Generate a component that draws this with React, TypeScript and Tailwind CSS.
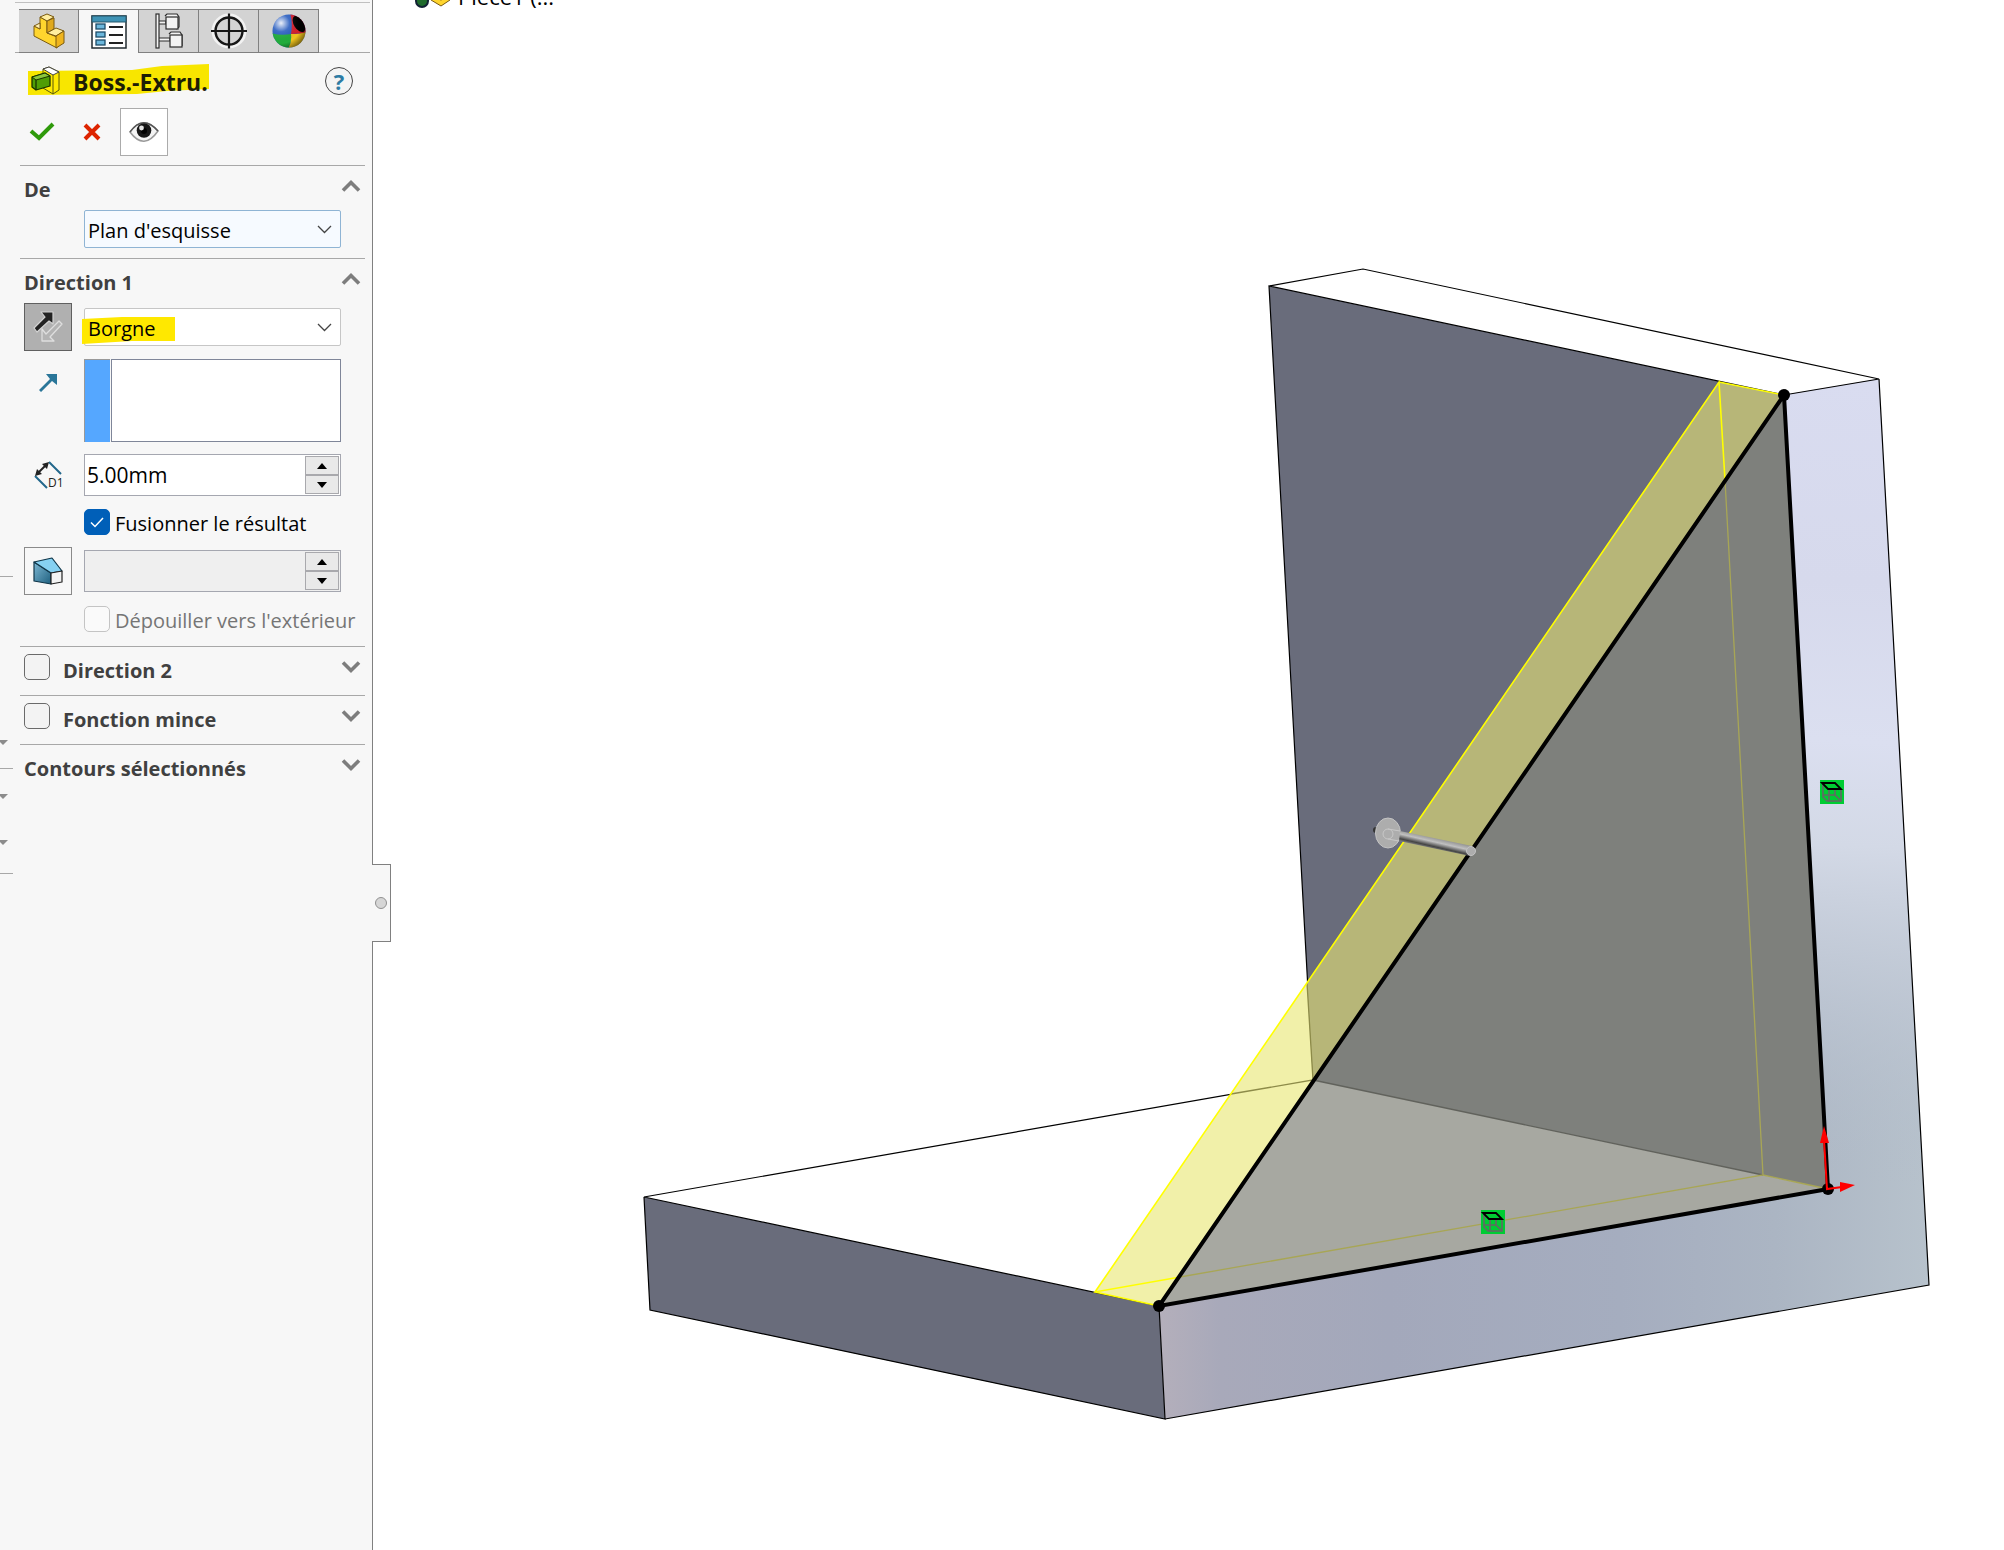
import { useState } from "react";
import type { ReactNode } from "react";

var S = {
  line: "border-[#a8a8a8]",
  field: "border border-[#a5a7b0]",
  heading: "text-[20px] leading-6 font-bold text-[#404040]",
  label: "text-[20px] leading-6",
};

function PartIcon() {
  return (
    <svg width="34" height="36" viewBox="0 0 34 36" strokeLinejoin="round" stroke="#7a5a10" strokeWidth="1">
      <path d="M2 13 L8 16 V4 L15 8 V20 L25 24 V35 L2 23Z" fill="#ffd52e" />
      <path d="M15 8 L22 5 V16 L15 20Z" fill="#e0a91c" />
      <path d="M8 4 L15 1 L22 4 L15 8Z" fill="#ffeea0" />
      <path d="M2 13 L8 10 V16Z" fill="#fff0b4" />
      <path d="M15 20 L24 15 L32 18 L24 23Z" fill="#ffeea0" />
      <path d="M24 23 L32 18 V30 L24 35Z" fill="#efb41d" />
    </svg>
  );
}

function PropertyIcon() {
  return (
    <svg width="36" height="34" viewBox="0 0 36 34">
      <rect x="1" y="1" width="34" height="32" fill="#fff" stroke="#222b30" strokeWidth="1.5" />
      <rect x="1" y="1" width="34" height="6" fill="#3f93b5" stroke="#24566b" strokeWidth="1" />
      {[9, 17, 25].map(function(y) {
        return (
          <g key={y}>
            <rect x="5" y={y} width="9" height="5" fill="#6cb7dc" stroke="#1d4c68" strokeWidth="1.3" />
            <path d={"M18 " + (y + 3) + "H32"} stroke="#222" strokeWidth="2" />
          </g>
        );
      })}
    </svg>
  );
}

function ConfigIcon() {
  return (
    <svg width="30" height="36" viewBox="0 0 30 36" fill="#f3f3f3" stroke="#2c2c2c" strokeWidth="1.2">
      <path d="M4 8 H12 V11 H4Z M4 25 H16 V28 H4Z" />
      <rect x="2" y="1" width="3" height="34" />
      <path d="M11 3 L13 1 H23 L25 4 V14 L22 16" />
      <rect x="12" y="4" width="12" height="12" />
      <path d="M15 21 L17 19 H26 L28 22 V33" />
      <rect x="16" y="22" width="12" height="12" />
    </svg>
  );
}

function TargetIcon() {
  return (
    <svg width="38" height="38" viewBox="0 0 38 38" fill="none">
      <circle cx="19" cy="19" r="15" stroke="#f2f2f2" strokeWidth="5" />
      <circle cx="19" cy="19" r="13.5" stroke="#161616" strokeWidth="2.4" />
      <path d="M1 19H37M19 1.500V36.500" stroke="#161616" strokeWidth="2.200" />
    </svg>
  );
}

function AppearanceIcon() {
  return (
    <svg width="36" height="36" viewBox="0 0 36 36">
      <defs>
        <clipPath id="ball"><circle cx="18" cy="18" r="16.500" /></clipPath>
        <radialGradient id="shine" cx="0.28" cy="0.28" r="0.8">
          <stop offset="0" stopColor="#fff" stopOpacity="0.9" />
          <stop offset="0.3" stopColor="#fff" stopOpacity="0.1" />
          <stop offset="0.7" stopColor="#000" stopOpacity="0" />
          <stop offset="1" stopColor="#000" stopOpacity="0.55" />
        </radialGradient>
      </defs>
      <g clipPath="url(#ball)">
        <rect width="36" height="36" fill="#2b5fc0" />
        <path d="M0 20 Q10 23 20 21 Q21 30 17 36 H0Z" fill="#22ad3c" />
        <path d="M20 21 Q30 21 36 18 V36 H17 Q21 29 20 21Z" fill="#eec21c" />
        <path d="M19 0 H36 V19 Q30 21 20 21 Q22 10 19 0Z" fill="#d31f2c" />
        <ellipse cx="28" cy="11" rx="5" ry="9" transform="rotate(-32 28 11)" fill="#000" />
        <rect width="36" height="36" fill="url(#shine)" />
      </g>
    </svg>
  );
}

function BossIcon() {
  return (
    <svg width="30" height="30" viewBox="0 0 30 30" strokeLinejoin="round">
      <path d="M12 3 L18 1 L28 6 V24 L22 28 L12 22Z" fill="#ffea00" stroke="#59590d" strokeWidth="1" />
      <path d="M12 3 L18 1 L28 6 L22 9Z" fill="#fff" stroke="#444" strokeWidth="1" />
      <path d="M22 9V28" stroke="#59590d" strokeWidth="1" />
      <path d="M1 11 L14 7 L19 10 V20 L5 24 L1 21Z" fill="#4f9d05" stroke="#173300" strokeWidth="1.300" />
      <path d="M1 11 L14 7 L19 10 L5 14Z" fill="#8bc63c" stroke="#173300" strokeWidth="1" />
      <path d="M5 14V24" stroke="#173300" strokeWidth="1.300" />
    </svg>
  );
}

function EyeIcon() {
  return (
    <svg width="30" height="24" viewBox="0 0 30 24">
      <path d="M1 12 Q14 -6 29 11 Q15 31 1 12Z" fill="#f4f4f4" stroke="#9a9a9a" strokeWidth="1.600" />
      <path d="M1 12 Q14 -6 29 11" fill="none" stroke="#555" strokeWidth="1.400" />
      <circle cx="15" cy="10.500" r="7.300" fill="#161616" />
      <circle cx="15" cy="11" r="3" fill="#000" />
      <circle cx="12.500" cy="8" r="2.400" fill="#e4e4e4" />
    </svg>
  );
}

function ReverseIcon() {
  return (
    <svg width="32" height="34" viewBox="0 0 32 34" strokeLinejoin="round">
      <path d="M2 18 L13 7 L9 2 H21 V14 L17 11 L5 22Z" fill="#222" stroke="#d2d2d2" strokeWidth="1.200" />
      <path d="M30 14 L27 11 L14 24 L10 19 V31 H22 L18 27Z" fill="#b4b4b4" stroke="#dedede" strokeWidth="1.300" />
    </svg>
  );
}

function DepthIcon() {
  return (
    <svg className="shrink-0" width="30" height="30" viewBox="0 0 30 30">
      <path d="M2 16 L14 28 M16 2 L28 14" stroke="#23688c" strokeWidth="2" />
      <path d="M5 13 L13 5" stroke="#222" strokeWidth="2" />
      <path d="M2 16 L4 9 L9 14Z M16 2 L9 4 L14 9Z" fill="#222" />
      <text x="15" y="27" fontSize="12" fontFamily="Open Sans, sans-serif" fill="#222">D1</text>
    </svg>
  );
}

function DraftIcon() {
  return (
    <svg width="30" height="28" viewBox="0 0 30 28" strokeLinejoin="round" stroke="#0f3548" strokeWidth="1.200">
      <defs>
        <linearGradient id="draft" x1="0" y1="0" x2="1" y2="1">
          <stop offset="0" stopColor="#7db8d4" />
          <stop offset="1" stopColor="#1f607f" />
        </linearGradient>
      </defs>
      <path d="M1 5 L18 16 V27 L1 24Z" fill="url(#draft)" />
      <path d="M1 5 L19 1 L29 14 L18 16Z" fill="#86d1f2" />
      <path d="M18 16 L29 14 V25 L18 27Z" fill="#f3f3f3" stroke="#222" />
    </svg>
  );
}

function Chevron({ open }: { open: boolean }) {
  return (
    <svg width="20" height="14" viewBox="0 0 20 14" fill="none" stroke="#7d7d7d" strokeWidth="3.600">
      <path d={open ? "M2 11.500 L10 3.500 L18 11.500" : "M2 2.500 L10 10.500 L18 2.500"} />
    </svg>
  );
}

function Heading({ title, open, children }: { title: string; open: boolean; children?: ReactNode }) {
  return (
    <div className="h-10 mb-1 flex items-center pl-1 pr-1">
      {children}
      <button type="button" aria-expanded={open} className="flex-1 flex items-center justify-between">
        <span className={"pt-2 " + S.heading}>{title}</span>
        <Chevron open={open} />
      </button>
    </div>
  );
}

function Dropdown({ label, value, className, mark }: { label: string; value: string; className: string; mark?: boolean }) {
  return (
    <div className={"relative isolate flex-1 min-w-0 h-[38px] rounded-xs border " + className}>
      {mark && (
        <svg className="absolute -left-[3px] top-[7px] -z-10" width="94" height="28" viewBox="0 0 94 28">
          <path d="M0 3 L40 1 L93 1 V25 L50 25 L0 28Z" fill="#ffe800" />
        </svg>
      )}
      <select aria-label={label} className={"appearance-none w-full h-full pl-[3px] pt-[3px] bg-transparent text-black outline-none " + S.label}>
        <option>{value}</option>
      </select>
      <svg className="absolute right-2 top-3 pointer-events-none" width="15" height="12" viewBox="0 0 15 12">
        <path d="M1 3 L7.500 9.500 L14 3" fill="none" stroke="#444" strokeWidth="1.300" />
      </svg>
    </div>
  );
}

function SpinBox({ label, value, disabled }: { label: string; value: string; disabled?: boolean }) {
  return (
    <div className={"flex-1 min-w-0 flex h-[42px] p-px " + S.field + " " + (disabled ? "bg-[#efefef]" : "bg-white")}>
      <input aria-label={label} defaultValue={value} disabled={disabled} className="flex-1 min-w-0 pl-px bg-transparent text-[21px] leading-6 text-black outline-none" />
      <div className="w-[34px] shrink-0 flex flex-col">
        {["M0 6 L5 0 L10 6Z", "M0 0 L5 6 L10 0Z"].map(function(d, i) {
          return (
            <button key={d} type="button" aria-label={label + (i === 0 ? " +" : " -")} className="flex-1 flex items-center justify-center border border-[#a9a9ad] bg-[#e9e9e9]">
              <svg width="10" height="6" viewBox="0 0 10 6"><path d={d} fill="#000" /></svg>
            </button>
          );
        })}
      </div>
    </div>
  );
}

function Tick({ id, label, checked, disabled, onChange }: { id: string; label?: string; checked: boolean; disabled?: boolean; onChange?: () => void }) {
  return (
    <span className="relative flex w-[26px] h-[26px] shrink-0">
      <input
        id={id}
        type="checkbox"
        aria-label={label}
        checked={checked}
        disabled={disabled}
        onChange={onChange}
        className="appearance-none w-full h-full rounded-[5px] border border-[#6a6a6a] bg-[#f3f3f3] checked:border-[#005fb8] checked:bg-[#005fb8] disabled:border-[#c4c4c4] disabled:bg-[#fafafa]"
      />
      {checked && (
        <svg className="absolute inset-0 pointer-events-none" width="26" height="26" viewBox="0 0 26 26">
          <path d="M7 13.500 L11 17.500 L19 9" fill="none" stroke="#fff" strokeWidth="1.500" />
        </svg>
      )}
    </span>
  );
}

// leftovers of the vertical toolbar docked beside the panel
function ToolbarEdge() {
  var arrow = <svg width="8" height="5" viewBox="0 0 8 5"><path d="M-2 0H8L3 5Z" fill="#8c8c8c" /></svg>;
  return (
    <div className="w-[15px] shrink-0 pr-0.5 flex flex-col">
      <div className={"h-[577px] border-b " + S.line} />
      <div className="h-[163px]" />
      {arrow}
      <div className={"h-6 border-b " + S.line} />
      <div className="h-[25px]" />
      {arrow}
      <div className="h-[41px]" />
      {arrow}
      <div className={"h-[29px] border-b " + S.line} />
    </div>
  );
}

function Tabs() {
  var tabs = [
    { name: "FeatureManager", icon: <PartIcon /> },
    { name: "PropertyManager", icon: <PropertyIcon /> },
    { name: "ConfigurationManager", icon: <ConfigIcon /> },
    { name: "DimXpertManager", icon: <TargetIcon /> },
    { name: "DisplayManager", icon: <AppearanceIcon /> },
  ];
  return (
    <div role="tablist" className="flex h-11">
      <div className={"w-1 border-b " + S.line} />
      {tabs.map(function(tab, i) {
        return (
          <button
            key={tab.name}
            type="button"
            role="tab"
            aria-label={tab.name}
            aria-selected={i === 1}
            className={"w-[60px] flex items-center justify-center border-t border-r border-[#808080] " + (i === 1 ? "" : "border-b bg-[#d3d3d3]")}
          >
            {tab.icon}
          </button>
        );
      })}
      <div className={"flex-1 border-b " + S.line} />
    </div>
  );
}

function ConstraintMark({ x, y }: { x: number; y: number }) {
  return (
    <g transform={"translate(" + x + " " + y + ")"} fill="none" strokeWidth="2">
      <rect width="24" height="24" fill="#00cc33" />
      <path d="M3 4 V17 L7 21 H21 V10 M9 10 V21 M3 15 H15 V9 M15 15 L20 20" stroke="#666" strokeWidth="1.600" />
      <path d="M2 3 H15 L21 9 H8Z" stroke="#000" strokeWidth="1.800" />
    </g>
  );
}

function Scene() {
  return (
    <svg className="block w-full h-screen" viewBox="373 0 1631 1550" preserveAspectRatio="xMinYMin meet" role="img" aria-label="Pièce1">
      <defs>
        <linearGradient id="base" gradientUnits="userSpaceOnUse" x1="1159" y1="0" x2="1929" y2="0">
          <stop offset="0" stopColor="#b4afbb" />
          <stop offset="0.080" stopColor="#a8a9ba" />
          <stop offset="0.300" stopColor="#a3a8bb" />
          <stop offset="0.600" stopColor="#a5adbf" />
          <stop offset="0.800" stopColor="#abb5c3" />
          <stop offset="1" stopColor="#b7c2cc" />
        </linearGradient>
        <linearGradient id="wall" gradientUnits="userSpaceOnUse" x1="1840" y1="380" x2="1800" y2="1180">
          <stop offset="0" stopColor="#d9dcf0" />
          <stop offset="0.250" stopColor="#d6d9ec" />
          <stop offset="0.450" stopColor="#dbdff0" />
          <stop offset="0.580" stopColor="#d3d9e6" />
          <stop offset="0.750" stopColor="#c2cad7" stopOpacity="0.800" />
          <stop offset="1" stopColor="#b0bac8" stopOpacity="0" />
        </linearGradient>
        <linearGradient id="rod" gradientUnits="userSpaceOnUse" x1="1437" y1="837" x2="1434" y2="850">
          <stop offset="0" stopColor="#8a8a8a" />
          <stop offset="0.400" stopColor="#c0c0c0" />
          <stop offset="0.750" stopColor="#444" />
          <stop offset="1" stopColor="#999" />
        </linearGradient>
      </defs>

      {/* bracket */}
      <path d="M1269 286 L1784 395 L1828 1189 L1313 1080Z" fill="#696c7b" />
      <path d="M644 1197 L1159 1306 L1165 1419 L650 1310Z" fill="#696c7b" />
      <path d="M1784 395 L1879 379 L1929 1285 L1165 1419 L1159 1306 L1828 1189Z" fill="url(#base)" />
      <path d="M1784 395 L1879 379 L1929 1285 L1828 1189Z" fill="url(#wall)" />
      <g fill="none" stroke="#000" strokeWidth="1.200">
        <path d="M1269 286 L1363 269 L1879 379 L1784 395 L1269 286 L1313 1080 L644 1197 L1159 1306 L1165 1419 L650 1310 L644 1197" />
        <path d="M1165 1419 L1929 1285 L1879 379" />
      </g>

      {/* preview of the rib */}
      <path d="M1719 382 L1784 395 L1313 1080 L1307 983Z" fill="#b7b678" />
      <path d="M1307 983 L1313 1080 L1159 1306 L1095 1292Z" fill="#f1f0a9" />
      <path d="M1784 395 L1828 1189 L1313 1080Z" fill="#7e807c" />
      <path d="M1313 1080 L1828 1189 L1159 1306Z" fill="#a7a8a1" />
      <g fill="none" strokeWidth="1.300">
        <path d="M1307 983 L1313 1080 L1231 1094" stroke="#8d8b49" />
        <path d="M1313 1080 L1763 1175" stroke="#61625c" />
        <path d="M1725 480 L1763 1175 L1180 1277 M1763 1175 L1828 1189" stroke="#a8a655" />
        <path d="M1725 480 L1719 382 L1095 1292 L1180 1277 M1095 1292 L1159 1306 M1719 382 L1784 395" stroke="#ffff00" strokeWidth="1.600" />
      </g>
      <path d="M1784 395 L1828 1189 L1159 1306Z" fill="none" stroke="#000" strokeWidth="4" />
      <circle cx="1784" cy="395" r="6" />
      <circle cx="1828" cy="1189" r="6" />
      <circle cx="1159" cy="1306" r="6" />

      {/* origin */}
      <path d="M1824 1140 L1827 1189 L1842 1187" fill="none" stroke="#f00" strokeWidth="2" />
      <path d="M1824 1126 L1829 1143 H1820Z M1855 1185 L1840 1182 V1192Z" fill="#f00" />

      {/* drag handle */}
      <circle cx="1376" cy="830" r="3" fill="#333" />
      <ellipse cx="1388" cy="833" rx="12.500" ry="15" fill="#adadad" stroke="#c4c4c4" />
      <path d="M1400 831 L1472 846 L1470 856 L1399 841Z" fill="url(#rod)" />
      <path d="M1400 831 L1388 829 M1388 839 L1399 841" fill="none" stroke="#c8c8c8" />
      <circle cx="1388" cy="834" r="5" fill="none" stroke="#c8c8c8" />
      <circle cx="1471" cy="851" r="4.500" fill="#adadad" stroke="#c4c4c4" />

      <ConstraintMark x={1820} y={780} />
      <ConstraintMark x={1481} y={1210} />

      {/* feature tree icons */}
      <circle cx="422" cy="1" r="6" fill="#1f6b2c" stroke="#123" strokeWidth="2" />
      <path d="M431 -4 L441 0 L450 -4 V0 L441 6 L431 0Z" fill="#ffd52e" stroke="#7a5a10" />
    </svg>
  );
}

export default function App() {
  var [merge, setMerge] = useState(true);
  var [second, setSecond] = useState(false);
  var [thin, setThin] = useState(false);

  return (
    <div className="flex min-h-screen bg-white overflow-hidden font-['Open_Sans',sans-serif]">
      <aside className="relative z-10 w-[373px] shrink-0 flex border-r border-[#808080] bg-[#f7f7f7]">
        <ToolbarEdge />
        <div className="flex-1 min-w-0 pt-0.5 pr-0.5">
          <div className="border-t border-[#c0c0c0] pt-1.5">
            <Tabs />
          </div>

          <div className="h-[55px] flex items-center pl-4 pr-[17px]">
            <div className="relative isolate flex items-center">
              <svg className="absolute -left-1 top-0 -z-10" width="183" height="32" viewBox="0 0 183 32">
                <path d="M1 7 L105 6 L135 2 L182 0 V25 L140 27 L110 30 L1 31Z" fill="#f8e600" />
              </svg>
              <BossIcon />
              <h1 className="pl-3 pt-0.5 text-[23px] leading-8 font-bold text-[#1d1d05]">Boss.-Extru.</h1>
            </div>
            <button type="button" aria-label="Aide" className="ml-auto w-7 h-7 rounded-full border border-[#444] bg-[#f4f4f4] text-[22px] leading-6 font-bold text-[#2d7ba3]">?</button>
          </div>

          <div className="h-12 flex items-center pl-[7px]">
            <button type="button" aria-label="OK" className="w-10 flex justify-center">
              <svg width="26" height="20" viewBox="0 0 26 20"><path d="M2 9 L10 16 L24 2" fill="none" stroke="#2f9a0b" strokeWidth="4" /></svg>
            </button>
            <button type="button" aria-label="Annuler" className="ml-2.5 w-10 flex justify-center">
              <svg width="18" height="18" viewBox="0 0 18 18"><path d="M2 2 L16 16 M16 2 L2 16" stroke="#dd2400" strokeWidth="4" /></svg>
            </button>
            <button type="button" aria-label="Aperçu" className="ml-2 w-12 h-12 flex items-center justify-center border border-[#ababab] bg-white">
              <EyeIcon />
            </button>
          </div>

          <div className="mt-[9px] mx-[5px]">
            <section className={"border-t pb-2.5 " + S.line}>
              <Heading title="De" open={true} />
              <div className="flex pl-16 pr-6">
                <Dropdown label="De" value="Plan d'esquisse" className="border-[#8fb4d4] bg-[#f6faff]" />
              </div>
            </section>

            <section className={"border-t pb-3.5 " + S.line}>
              <Heading title="Direction 1" open={true} />
              <div className="flex items-center gap-3 pl-1 pr-6">
                <button type="button" aria-label="Inverser la direction" className="w-12 h-12 shrink-0 flex items-center justify-center border border-[#606060] bg-[#b0b0b0]">
                  <ReverseIcon />
                </button>
                <Dropdown label="Condition de fin" value="Borgne" className="border-[#c6c6c6] bg-white" mark />
              </div>
              <div className="mt-2 flex gap-3 pl-1 pr-6">
                <div className="w-12 shrink-0 pt-3.5 flex justify-center">
                  <svg width="20" height="20" viewBox="0 0 20 20"><path d="M1 17 L12 6 L8 1 H19 V12 L14 8 L3 19Z" fill="#2a7699" /></svg>
                </div>
                <div className="flex-1 min-w-0 flex gap-px h-[83px]">
                  <div className="w-[26px] border-t border-l border-[#999] bg-[#55a7ff]" />
                  <textarea aria-label="Direction d'extrusion" readOnly className="flex-1 min-w-0 resize-none border border-[#7f8699] bg-white outline-none" />
                </div>
              </div>
              <div className="mt-3 flex items-center gap-3 pl-1 pr-6">
                <div className="w-12 shrink-0 flex justify-center"><DepthIcon /></div>
                <SpinBox label="Profondeur" value="5.00mm" />
              </div>
              <div className="mt-[13px] h-[26px] flex items-center gap-[5px] pl-16">
                <Tick id="merge" checked={merge} onChange={function() { setMerge(!merge); }} />
                <label htmlFor="merge" className={"pt-1 whitespace-nowrap text-black " + S.label}>Fusionner le résultat</label>
              </div>
              <div className="mt-3 flex items-center gap-3 pl-1 pr-6">
                <button type="button" aria-label="Dépouille" className="w-12 h-12 shrink-0 flex items-center justify-center border border-[#8a8a8a]">
                  <DraftIcon />
                </button>
                <SpinBox label="Angle" value="" disabled />
              </div>
              <div className="mt-[11px] h-[26px] flex items-center gap-[5px] pl-16">
                <Tick id="outward" checked={false} disabled />
                <label htmlFor="outward" className={"pt-1 whitespace-nowrap text-[#757575] " + S.label}>Dépouiller vers l'extérieur</label>
              </div>
            </section>

            <section className={"border-t pb-1 " + S.line}>
              <Heading title="Direction 2" open={false}>
                <div className="w-[39px]"><Tick id="second" label="Direction 2" checked={second} onChange={function() { setSecond(!second); }} /></div>
              </Heading>
            </section>
            <section className={"border-t pb-1 " + S.line}>
              <Heading title="Fonction mince" open={false}>
                <div className="w-[39px]"><Tick id="thin" label="Fonction mince" checked={thin} onChange={function() { setThin(!thin); }} /></div>
              </Heading>
            </section>
            <section className={"border-t " + S.line}>
              <Heading title="Contours sélectionnés" open={false} />
            </section>
          </div>
        </div>

        {/* panel splitter */}
        <div className="absolute left-full top-[864px] w-[19px] h-[78px] flex items-center justify-center border border-l-0 border-[#808080] bg-[#f7f7f7]">
          <span className="w-3 h-3 rounded-full border border-[#909090] bg-[#d6d6d6]" />
        </div>
      </aside>

      <main className="relative flex-1 min-w-0">
        <Scene />
        <p className="absolute left-[85px] -top-[18px] text-[22px] leading-7 text-black whitespace-nowrap">Pièce1 (...</p>
      </main>
    </div>
  );
}
